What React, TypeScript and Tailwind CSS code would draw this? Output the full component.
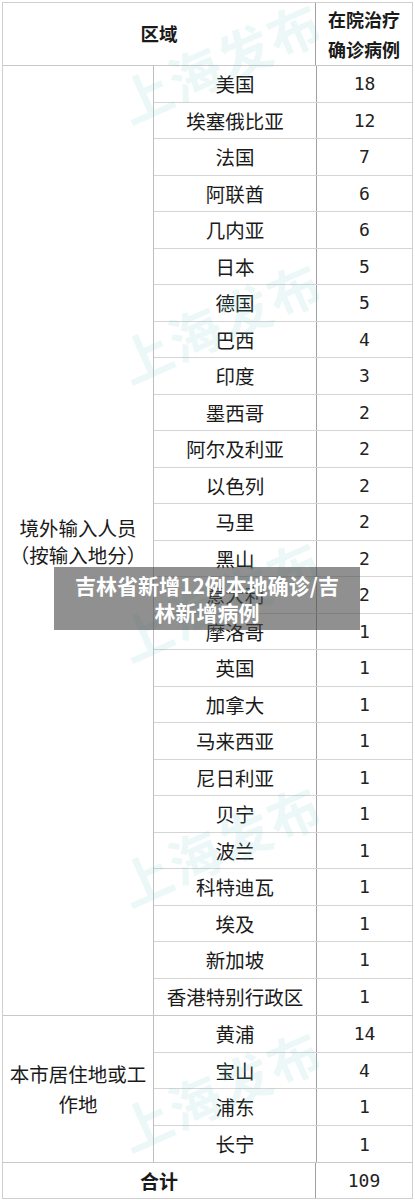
import React from "react";

const abroad: [string, number][] = [
  ["美国", 18],
  ["埃塞俄比亚", 12],
  ["法国", 7],
  ["阿联酋", 6],
  ["几内亚", 6],
  ["日本", 5],
  ["德国", 5],
  ["巴西", 4],
  ["印度", 3],
  ["墨西哥", 2],
  ["阿尔及利亚", 2],
  ["以色列", 2],
  ["马里", 2],
  ["黑山", 2],
  ["意大利", 2],
  ["摩洛哥", 1],
  ["英国", 1],
  ["加拿大", 1],
  ["马来西亚", 1],
  ["尼日利亚", 1],
  ["贝宁", 1],
  ["波兰", 1],
  ["科特迪瓦", 1],
  ["埃及", 1],
  ["新加坡", 1],
  ["香港特别行政区", 1],
];

const local: [string, number][] = [
  ["黄浦", 14],
  ["宝山", 4],
  ["浦东", 1],
  ["长宁", 1],
];

const cjk = "font-['Noto_Sans_CJK_SC','Noto_Sans',sans-serif]";
const mono = "font-['DejaVu_Sans_Mono','Liberation_Mono',monospace]";

function Row({ name, n, last, h }: { name: string; n: number; last: boolean; h: string }) {
  return (
    <div className={`flex ${h} ${last ? "" : "border-b border-[#d4d4d4]"}`}>
      <div className={`w-[162px] flex items-center justify-center text-[19.5px] text-[#1a1a1a] ${cjk}`}>
        {name}
      </div>
      <div className={`flex-1 flex items-center justify-center border-l border-[#a0a0a0] text-[18px] text-[#222] ${mono}`}>
        {n}
      </div>
    </div>
  );
}

function Watermark({ top }: { top: string }) {
  return (
    <div
      className={`absolute left-[112px] ${top} pointer-events-none select-none whitespace-nowrap text-[52px] font-bold tracking-[2px] text-[rgba(120,205,195,0.14)] -rotate-[24deg] ${cjk}`}
    >
      上海发布
    </div>
  );
}

export default function App() {
  return (
    <div className="relative w-[415px] h-[1200px] bg-white overflow-hidden">
      <div className="relative pt-[2px] pl-[2px]">
        <div className="w-[411px] border border-[#cfcfcf]">
          {/* header */}
          <div className="flex h-[63px] border-b border-[#c8c8c8]">
            <div className={`w-[312px] flex items-center justify-center text-[18.5px] font-bold text-[#1a1a1a] ${cjk}`}>
              区域
            </div>
            <div className={`flex-1 flex items-center justify-center text-center border-l border-[#a0a0a0] text-[18px] font-bold leading-[30px] text-[#1a1a1a] ${cjk}`}>
              在院治疗
              <br />
              确诊病例
            </div>
          </div>

          {/* abroad */}
          <div className="flex border-b border-[#c8c8c8]">
            <div className={`w-[151px] border-r border-[#bdbdbd] flex items-center justify-center text-center text-[19.5px] leading-[27px] text-[#1a1a1a] ${cjk}`}>
              境外输入人员
              <br />
              （按输入地分）
            </div>
            <div className="flex-1">
              {abroad.map(([name, n], i) => (
                <Row key={name} name={name} n={n} last={i === abroad.length - 1} h="h-[36.5px]" />
              ))}
            </div>
          </div>

          {/* local */}
          <div className="flex border-b border-[#c8c8c8]">
            <div className={`w-[151px] border-r border-[#bdbdbd] flex items-center justify-center text-center text-[19.5px] leading-[30px] text-[#1a1a1a] ${cjk}`}>
              本市居住地或工
              <br />
              作地
            </div>
            <div className="flex-1">
              {local.map(([name, n], i) => (
                <Row key={name} name={name} n={n} last={i === local.length - 1} h="h-[36.6px]" />
              ))}
            </div>
          </div>

          {/* total */}
          <div className="flex h-[35px]">
            <div className={`w-[312px] flex items-center justify-center text-[19px] font-bold text-[#1a1a1a] ${cjk}`}>
              合计
            </div>
            <div className={`flex-1 flex items-center justify-center border-l border-[#a0a0a0] text-[18px] text-[#222] ${mono}`}>
              109
            </div>
          </div>
        </div>
      </div>

      <Watermark top="top-[22px]" />
      <Watermark top="top-[282px]" />
      <Watermark top="top-[560px]" />
      <Watermark top="top-[805px]" />
      <Watermark top="top-[1050px]" />

      {/* caption overlay */}
      <div className="absolute left-[54px] top-[567px] w-[306px] h-[63px] bg-[rgba(70,70,70,0.6)] flex items-center justify-center">
        <div className={`text-center text-white font-bold text-[21px] leading-[27px] whitespace-nowrap ${cjk}`}>
          吉林省新增12例本地确诊/吉
          <br />
          林新增病例
        </div>
      </div>
    </div>
  );
}
